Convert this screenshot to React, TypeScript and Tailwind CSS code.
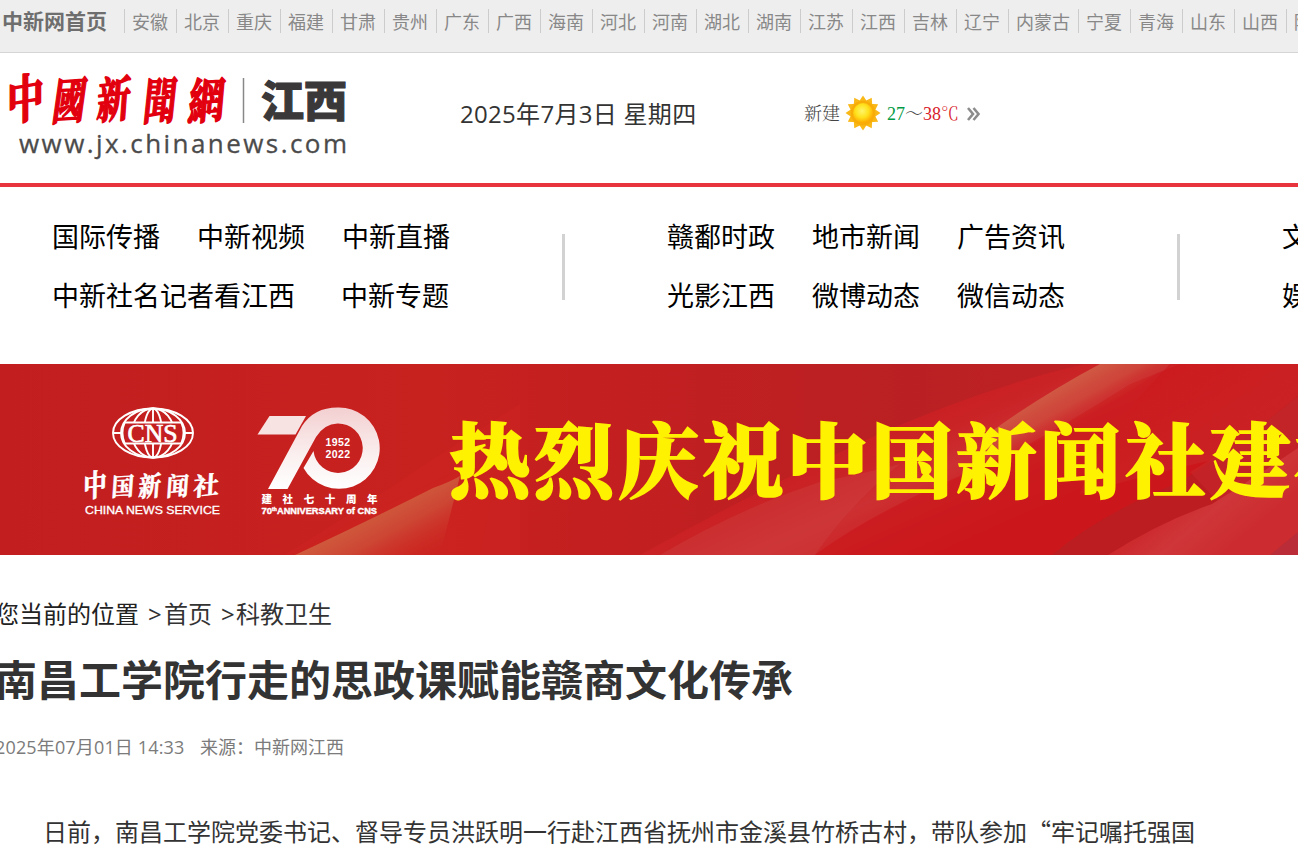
interface NavGroup {
  rows: string[][]
}

const PROVINCES = [
  '安徽', '北京', '重庆', '福建', '甘肃', '贵州', '广东', '广西', '海南', '河北', '河南', '湖北',
  '湖南', '江苏', '江西', '吉林', '辽宁', '内蒙古', '宁夏', '青海', '山东', '山西', '陕西',
]

const NAV_GROUPS: NavGroup[] = [
  { rows: [['国际传播', '中新视频', '中新直播'], ['中新社名记者看江西', '中新专题']] },
  { rows: [['赣鄱时政', '地市新闻', '广告资讯'], ['光影江西', '微博动态', '微信动态']] },
  { rows: [['文化旅游'], ['娱乐体育']] },
]

const SUN_RAYS = Array.from({ length: 12 }, (_, i) => i * 30)

function TopBar() {
  return (
    <nav className="flex h-[53px] overflow-hidden border-b border-[#d5d5d5] bg-[#eeeeee] pt-[9px] text-[#888]">
      <a className="ml-[2px] w-[122px] shrink-0 text-[21px] leading-[24px] font-bold text-[#6e6e6e]">中新网首页</a>
      {PROVINCES.map(name => (
        <a key={name} className="h-[24px] shrink-0 border-l border-[#ccc] pr-[8px] pl-[7px] text-[18px] leading-[26px] whitespace-nowrap">
          {name}
        </a>
      ))}
    </nav>
  )
}

function SiteLogo() {
  return (
    <svg className="h-[100px] w-[360px] shrink-0" viewBox="0 65 360 100">
      <g fill="#e2000f" stroke="#e2000f" strokeWidth="1.8" strokeLinejoin="round" fontFamily="'Noto Serif CJK SC', 'Noto Sans CJK SC', sans-serif" fontWeight="700" fontSize="48">
        <text transform="translate(7 121) rotate(-10) skewX(-10) scale(.78 1.06)">中</text>
        <text transform="translate(51 120) rotate(-4) skewX(-12) scale(.68 1.02)">國</text>
        <text transform="translate(96 119) rotate(-6) skewX(-10) scale(.7 1)">新</text>
        <text transform="translate(142 120) rotate(-3) skewX(-9) scale(.68 1.02)">聞</text>
        <text transform="translate(187 120) rotate(-4) skewX(-9) scale(.76 1.02)">網</text>
      </g>
      <path d="M243.500 78V123" stroke="#888" strokeWidth="1.500" />
      <text x="261" y="116.500" fontSize="43" fontWeight="900" fill="#3a3839" stroke="#3a3839" strokeWidth="1.200" textLength="86" fontFamily="'Noto Sans CJK SC', sans-serif">江西</text>
      <text x="19" y="152.500" fontSize="26" fill="#4b4b4b" stroke="#4b4b4b" strokeWidth=".3" textLength="328" fontFamily="'Open Sans', sans-serif">www.jx.chinanews.com</text>
    </svg>
  )
}

function SunIcon() {
  return (
    <svg className="h-[36px] w-[36px]" viewBox="-18 -18 36 36">
      <defs>
        <radialGradient id="sun" cx=".45" cy=".4" r=".6">
          <stop offset="0" stopColor="#fff56a" />
          <stop offset=".55" stopColor="#ffe11c" />
          <stop offset="1" stopColor="#ffa800" />
        </radialGradient>
      </defs>
      {SUN_RAYS.map(deg => (
        <path key={deg} d="M-5 -10L0 -17.500L5 -10Z" fill="#f9b817" transform={`rotate(${deg})`} />
      ))}
      <circle r="12.300" fill="#f8ac08" />
      <circle r="10" fill="url(#sun)" />
    </svg>
  )
}

function Header() {
  return (
    <header className="flex h-[134px] border-b-4 border-[#e8343c] pt-[12px]">
      <SiteLogo />
      <p className="mt-[31px] ml-[100px] w-[344px] shrink-0 font-['Open_Sans','Noto_Sans_CJK_SC',sans-serif] text-[24px] leading-[36px] tracking-[0.300px] text-[#333]">
        2025年7月3日 星期四
      </p>
      <div className="mt-[29px] flex h-[38px] items-center font-['Liberation_Serif','Noto_Serif_CJK_SC','Noto_Sans_CJK_SC',serif] text-[18px] font-light text-[#444]">
        <span className="mt-[3px] mr-[5px]">新建</span>
        <SunIcon />
        <span className="mt-[3px] ml-[6px] text-[#009a44]">27</span>
        <span className="mt-[3px]">～</span>
        <span className="mt-[3px] text-[#d8202a]">38℃</span>
        <svg className="mt-[2px] ml-[8px] h-[14px] w-[14px]" viewBox="0 0 14 14" fill="none" stroke="#8c8c8c" strokeWidth="2.600">
          <path d="M1 1L6 7L1 13M6.500 1L11.500 7L6.500 13" />
        </svg>
      </div>
    </header>
  )
}

function MainNav() {
  return (
    <nav className="flex h-[177px] overflow-hidden pt-[20px] pl-[52px] text-[27px] leading-[59px] text-black">
      {NAV_GROUPS.map((group, i) => (
        <div key={i} className="flex w-[615px] shrink-0">
          <div className="w-[510px]">
            {group.rows.map((row, j) => (
              <div key={j} className={`flex whitespace-nowrap ${row.length === 2 ? 'gap-[46px]' : 'gap-[37px]'}`}>
                {row.map(item => <a key={item}>{item}</a>)}
              </div>
            ))}
          </div>
          {i < 2 && <span className="mt-[27px] h-[66px] w-[3px] bg-[#d2d2d2]" />}
        </div>
      ))}
    </nav>
  )
}

function BannerBackground() {
  return (
    <svg className="absolute inset-0 h-full w-full" viewBox="0 0 1298 191" preserveAspectRatio="none">
      <defs>
        <linearGradient id="base" x1="0" y1="0" x2="1" y2="0">
          <stop offset="0" stopColor="#c21e20" />
          <stop offset=".33" stopColor="#c8221f" />
          <stop offset=".45" stopColor="#c41f20" />
          <stop offset=".7" stopColor="#ba2023" />
          <stop offset="1" stopColor="#c52326" />
        </linearGradient>
        <linearGradient id="corner" gradientUnits="userSpaceOnUse" x1="370" y1="150" x2="405" y2="215">
          <stop offset="0" stopColor="#cf5a3c" />
          <stop offset=".35" stopColor="#cd4634" />
          <stop offset="1" stopColor="#cc2320" stopOpacity="0" />
        </linearGradient>
        <linearGradient id="wave" gradientUnits="userSpaceOnUse" x1="860" y1="55" x2="925" y2="200">
          <stop offset="0" stopColor="#c91c1f" />
          <stop offset=".3" stopColor="#ca2427" />
          <stop offset=".5" stopColor="#cd3032" />
          <stop offset=".75" stopColor="#cb2225" />
          <stop offset="1" stopColor="#cb181c" />
        </linearGradient>
        <linearGradient id="glow" gradientUnits="userSpaceOnUse" x1="1040" y1="32" x2="1062" y2="72">
          <stop offset="0" stopColor="#d05a44" />
          <stop offset=".5" stopColor="#cf4a3c" stopOpacity=".8" />
          <stop offset="1" stopColor="#cc1d20" stopOpacity="0" />
        </linearGradient>
        <linearGradient id="right" gradientUnits="userSpaceOnUse" x1="1170" y1="0" x2="1240" y2="110">
          <stop offset="0" stopColor="#cc181c" />
          <stop offset=".5" stopColor="#cb2426" />
          <stop offset="1" stopColor="#c92b2e" />
        </linearGradient>
        <linearGradient id="edge" gradientUnits="userSpaceOnUse" x1="1160" y1="140" x2="1210" y2="200">
          <stop offset="0" stopColor="#cb2629" />
          <stop offset=".5" stopColor="#cf3639" />
          <stop offset="1" stopColor="#cc2c2f" />
        </linearGradient>
      </defs>
      <path d="M0 0H1298V191H0Z" fill="url(#base)" />
      <path d="M284 191Q355 148 433 95L520 40V191Z" fill="#cc2520" opacity=".55" />
      <path d="M292 191Q370 146 445 113L500 90L480 191Z" fill="#cc2320" opacity=".6" />
      <path d="M295 191Q370 156 433 124Q450 118 460 112L440 191Z" fill="url(#corner)" />
      <path d="M640 191Q750 130 866 76Q980 24 1085 0H1298V191Z" fill="url(#wave)" />
      <path d="M660 191Q740 144 820 118Q870 108 900 100Q850 140 815 191Z" fill="#cf3f3d" opacity=".45" />
      <path d="M815 191Q870 150 960 112Q1020 90 1130 20L1180 0H1298V191Z" fill="#cb171b" opacity=".65" />
      <path d="M1100 0H1298V80Q1200 95 1080 130Q1100 70 1170 0Z" fill="url(#right)" opacity=".6" />
      <path d="M985 72Q1040 32 1100 0H1170Q1090 58 985 100Z" fill="url(#glow)" />
      <path d="M1052 191Q1100 150 1180 118Q1240 80 1298 32V191Z" fill="#b91e22" opacity=".85" />
      <path d="M1190 108Q1250 72 1298 32V100L1220 140Z" fill="#c8282b" opacity=".6" />
      <path d="M1108 191Q1160 158 1212 140Q1260 110 1298 84V191Z" fill="url(#edge)" />
      <path d="M1270 191L1298 168V191Z" fill="#b92c38" />
    </svg>
  )
}

function CnsLogo() {
  return (
    <svg className="h-[120px] w-[145px] shrink-0" viewBox="80 400 145 120">
      <g fill="none" stroke="#fff" strokeWidth="1.900">
        <ellipse cx="153" cy="433" rx="40" ry="24.500" />
        <ellipse cx="153" cy="433" rx="32" ry="24.500" />
        <ellipse cx="153" cy="433" rx="21" ry="24.500" />
        <ellipse cx="153" cy="433" rx="9" ry="24.500" />
        <path d="M153 408V458M113 433H123M183 433H193" />
      </g>
      <path d="M126 423H180L182 433L180 443H126L124 433Z" fill="#c41f21" />
      <path d="M125 422.500H181M125 443.500H181" stroke="#fff" strokeWidth="1.800" />
      <path d="M125 422Q120 433 125 444M181 422Q186 433 181 444" fill="none" stroke="#fff" strokeWidth="1.800" />
      <text x="127.500" y="441.500" fontSize="25.500" fill="#fff" stroke="#fff" strokeWidth=".7" textLength="50" lengthAdjust="spacingAndGlyphs" fontFamily="'Liberation Serif', serif">CNS</text>
      <g fill="#fff" stroke="#fff" strokeWidth=".7" fontFamily="'Noto Serif CJK SC', 'Noto Sans CJK SC', sans-serif" fontWeight="700" fontSize="28">
        <text transform="translate(83 498) rotate(-8) skewX(-9) scale(.85 1.08)">中</text>
        <text transform="translate(111 496) rotate(-3) skewX(-7) scale(.8 .88)">国</text>
        <text transform="translate(138 497) rotate(-5) skewX(-9) scale(.8 .96)">新</text>
        <text transform="translate(166 496) rotate(-3) skewX(-7) scale(.8 .9)">闻</text>
        <text transform="translate(193 496) rotate(-6) skewX(-9) scale(.92 .88)">社</text>
      </g>
      <text x="85" y="513.500" fontSize="11.500" fill="#fff" stroke="#fff" strokeWidth=".3" textLength="135" lengthAdjust="spacingAndGlyphs" fontFamily="'Liberation Sans', sans-serif">CHINA NEWS SERVICE</text>
    </svg>
  )
}

function AnniversaryLogo() {
  return (
    <svg className="ml-[29px] h-[120px] w-[130px] shrink-0" viewBox="254 400 130 120">
      <defs>
        <linearGradient id="ring" x1="0" y1="0" x2="0" y2="1">
          <stop offset="0" stopColor="#f3cfd0" />
          <stop offset=".6" stopColor="#fbf0f0" />
          <stop offset="1" stopColor="#fff" />
        </linearGradient>
      </defs>
      <path d="M269.500 416H306L295.500 434.500H257.500Z" fill="#f8e3e3" />
      <path
        d="M268 489L302 426Q314 407.500 337.500 407.500A40.700 40.700 0 1 1 303.500 468L313.500 451A24.700 24.700 0 1 0 337.500 423.500Q324 424 316 437L287.500 489Z"
        fill="url(#ring)"
      />
      <g fill="#fff" fontFamily="'Liberation Sans', sans-serif" fontWeight="700">
        <text x="325.500" y="445.500" fontSize="10.500" textLength="24.500">1952</text>
        <text x="325.500" y="457.500" fontSize="10.500" textLength="24.500">2022</text>
        <text x="261.500" y="502.500" fontSize="10.500" fontWeight="900" textLength="116" fontFamily="'Noto Sans CJK SC', sans-serif">建社七十周年</text>
        <text x="261.500" y="513.500" fontSize="9.500" stroke="#fff" strokeWidth=".4">
          <tspan>70</tspan>
          <tspan dy="-3" fontSize="5">th</tspan>
        </text>
        <text x="277" y="513.500" fontSize="9.500" stroke="#fff" strokeWidth=".4" textLength="100" lengthAdjust="spacingAndGlyphs">ANNIVERSARY of CNS</text>
      </g>
    </svg>
  )
}

function Banner() {
  return (
    <section className="relative flex h-[191px] overflow-hidden">
      <BannerBackground />
      <div className="relative flex pt-[36px] pl-[80px]">
        <CnsLogo />
        <AnniversaryLogo />
        <p className="mt-[-4px] ml-[65px] shrink-0 font-['Noto_Serif_CJK_SC','Noto_Sans_CJK_SC',serif] text-[81px] leading-[120px] font-black tracking-[3.500px] whitespace-nowrap text-[#fff200] [-webkit-text-stroke:1.500px_#fff200]">
          热烈庆祝中国新闻社建社七十周年
        </p>
      </div>
    </section>
  )
}

function Article() {
  return (
    <main className="-ml-[5px] text-[#333]">
      <div className="mt-[40px] flex text-[24px] leading-[38px] whitespace-pre">
        <span className="w-[153px] text-[#222]">您当前的位置</span>
        <span className="w-[16px]">&gt;</span>
        <a className="w-[57px]">首页</a>
        <span className="w-[15px]">&gt;</span>
        <a>科教卫生</a>
      </div>
      <h1 className="mt-[17px] text-[42px] leading-[60px] font-bold whitespace-nowrap">南昌工学院行走的思政课赋能赣商文化传承</h1>
      <div className="mt-[23px] flex font-['Open_Sans','Noto_Sans_CJK_SC',sans-serif] text-[18px] leading-[28px] text-[#7b7b7b]">
        <span className="w-[205px] tracking-[0.150px]">2025年07月01日 14:33</span>
        <span>来源：中新网江西</span>
      </div>
      <p className="mt-[50px] indent-[48px] font-['Noto_Sans_CJK_SC',sans-serif] text-[24px] leading-[40px] whitespace-nowrap">
        日前，南昌工学院党委书记、督导专员洪跃明一行赴江西省抚州市金溪县竹桥古村，带队参加“牢记嘱托强国
      </p>
    </main>
  )
}

export default function App() {
  return (
    <div lang="zh-CN" className="h-[846px] overflow-hidden bg-white font-['Noto_Sans','Noto_Sans_CJK_SC',sans-serif]">
      <TopBar />
      <Header />
      <MainNav />
      <Banner />
      <Article />
    </div>
  )
}
